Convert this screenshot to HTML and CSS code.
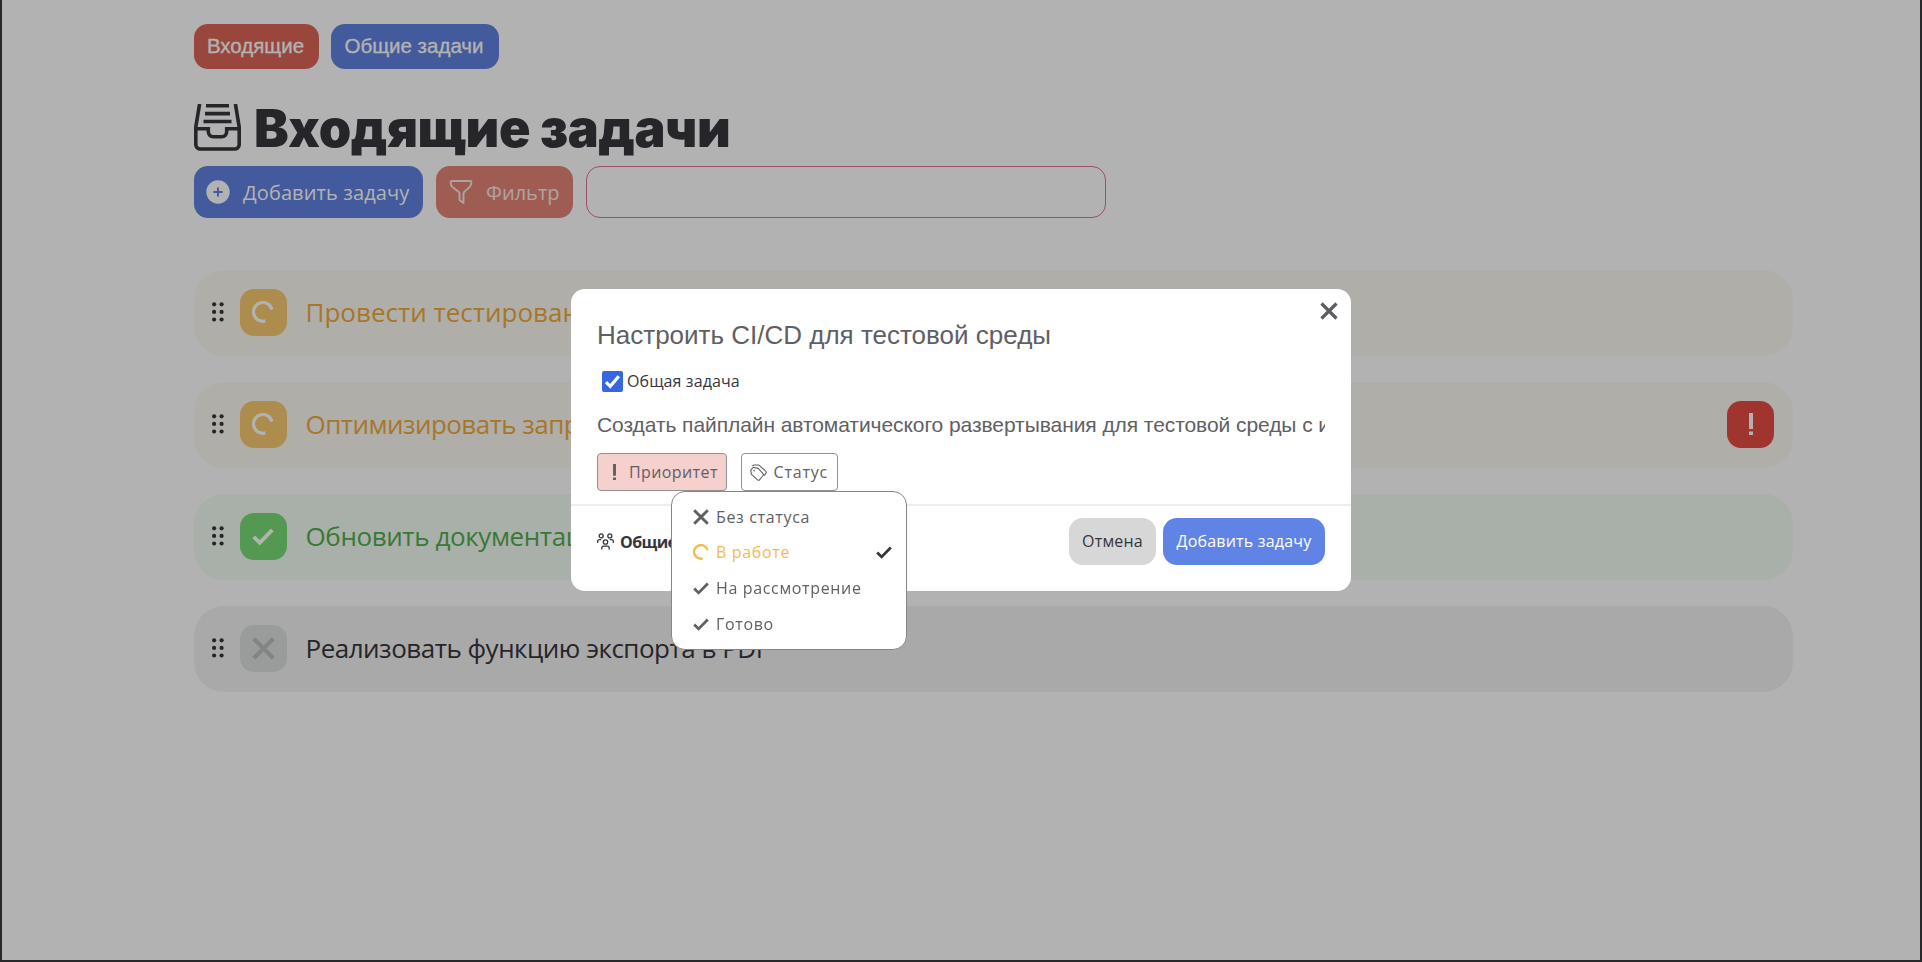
FILE: index.html
```html
<!DOCTYPE html>
<html lang="ru">
<head>
<meta charset="utf-8">
<title>Входящие задачи</title>
<link rel="stylesheet" href="styles.css">
</head>
<body>
<svg width="0" height="0" class="defs" aria-hidden="true">
  <symbol id="dots" viewBox="0 0 12 20"><g fill="currentColor"><circle cx="2.1" cy="2.3" r="2.1"/><circle cx="9.6" cy="2.3" r="2.1"/><circle cx="2.1" cy="9.9" r="2.1"/><circle cx="9.6" cy="9.9" r="2.1"/><circle cx="2.1" cy="17.5" r="2.1"/><circle cx="9.6" cy="17.5" r="2.1"/></g></symbol>
  <symbol id="ring" viewBox="0 0 22 22"><path d="M13.4 19.9A9.4 9.4 0 1 1 20 8.6" fill="none" stroke="currentColor" stroke-width="3.2"/></symbol>
  <symbol id="check" viewBox="0 0 16 16"><path d="M1.2 8.6 5.6 12.9 14.8 3.6" fill="none" stroke="currentColor" stroke-width="2.8"/></symbol>
  <symbol id="cross" viewBox="0 0 16 16"><path d="M1.2 1.2 14.8 14.8M14.8 1.2 1.2 14.8" fill="none" stroke="currentColor" stroke-width="2.9"/></symbol>
  <symbol id="bang" viewBox="0 0 4 22"><path d="M0 0h4v16H0zM0 18.6h4V22H0z" fill="currentColor"/></symbol>
</svg>

<div class="page">
  <nav class="nav">
    <a class="pill pill-red">Входящие</a>
    <a class="pill pill-blue">Общие задачи</a>
  </nav>
  <h1 class="title">
    <svg class="title-icon" viewBox="0 0 47 47" fill="none" stroke="currentColor"><path d="M5.6 0 1.8 23v17.5a4.5 4.5 0 0 0 4.5 4.5h34.4a4.5 4.5 0 0 0 4.5-4.5V23L41.4 0" stroke-width="3.6"/><path d="M2 24.8h12.3v2.7c0 3 2 5.2 5 5.2h8.4c3 0 5-2.2 5-5.2v-2.7H45" stroke-width="3.6"/><path d="M12 1.6h23M11 9.6h25M9.500 17.5h28" stroke-width="3.6"/></svg>
    <span>Входящие задачи</span>
  </h1>
  <div class="tools">
    <button class="tool tool-add"><svg width="24" height="24" viewBox="0 0 24 24"><circle cx="12" cy="12" r="11.7" fill="#fff"/><path d="M12 7.4v9.2M7.4 12h9.2" stroke="#6081e0" stroke-width="2"/></svg>Добавить задачу</button>
    <button class="tool tool-filter"><svg width="24" height="24" viewBox="0 0 24 24" fill="none" stroke="currentColor" stroke-width="1.9" stroke-linejoin="round"><path d="M2.800 1h18.400c.8 0 1.200.6 1.200 1.400 0 2-.8 3.500-2 4.700l-5.200 4.800c-.5.500-.7 1-.7 1.700v9.400l-4-3.100v-6.300c0-.7-.2-1.200-.7-1.700L4 7.600C2.500 6.300 1.600 4.500 1.600 2.400 1.600 1.600 2 1 2.800 1z"/></svg>Фильтр</button>
    <input class="search" type="text">
  </div>
  <main class="list">
    <div class="row row-work"><svg class="drag"><use href="#dots"/></svg><span class="badge"><svg width="22" height="22"><use href="#ring"/></svg></span><span class="name">Провести тестирование</span></div>
    <div class="row row-work"><svg class="drag"><use href="#dots"/></svg><span class="badge"><svg width="22" height="22"><use href="#ring"/></svg></span><span class="name name-tight">Оптимизировать запросы</span><span class="badge urgent"><svg width="4" height="22"><use href="#bang"/></svg></span></div>
    <div class="row row-done"><svg class="drag"><use href="#dots"/></svg><span class="badge"><svg width="22" height="22"><use href="#check"/></svg></span><span class="name">Обновить документацию</span></div>
    <div class="row row-none"><svg class="drag"><use href="#dots"/></svg><span class="badge"><svg width="23" height="23"><use href="#cross"/></svg></span><span class="name">Реализовать функцию экспорта в PDF</span></div>
  </main>
</div>

<div class="overlay">
  <section class="modal">
    <svg class="close" viewBox="0 0 18 18"><path d="M1.500 1.500 16.500 16.500M16.500 1.500 1.500 16.500" stroke="currentColor" stroke-width="3.2"/></svg>
    <div class="body">
      <h2 class="task-title">Настроить CI/CD для тестовой среды</h2>
      <label class="shared"><span class="box"><svg width="17" height="17" viewBox="0 0 17 17"><path d="M2 9.2 6.2 13.3 14.8 3.3" fill="none" stroke="#fff" stroke-width="3.2"/></svg></span>Общая задача</label>
      <p class="desc">Создать пайплайн автоматического развертывания для тестовой среды с использованием</p>
      <div class="chips">
        <button class="chip chip-priority"><svg width="3" height="16"><use href="#bang"/></svg>Приоритет</button>
        <div class="status">
          <button class="chip chip-status"><svg width="17" height="17" viewBox="0 0 17 17" fill="none" stroke="currentColor" stroke-width="1.1" stroke-linejoin="round"><path d="M.8 6.200 2.600 4c.4-.4.8-.6 1.400-.5l3.300.6c.5.1.8.3 1.100.6l4.700 4.900c.5.600.5 1.300 0 1.900l-3.600 4.300c-.5.600-1.300.6-1.900 0L1.800 10.700c-.3-.3-.5-.6-.5-1z"/><path d="M2.200 2.100 4 1h4.200c.6 0 1 .2 1.400.6l6.200 5.700c.6.600.6 1.300.1 2l-1.800 2.400"/><circle cx="4.200" cy="6.600" r=".3"/></svg>Статус</button>
          <ul class="menu">
            <li><svg class="mi"><use href="#cross"/></svg>Без статуса</li>
            <li class="current"><svg class="mi"><use href="#ring"/></svg>В работе<svg class="mi mark"><use href="#check"/></svg></li>
            <li><svg class="mi"><use href="#check"/></svg>На рассмотрение</li>
            <li><svg class="mi"><use href="#check"/></svg>Готово</li>
          </ul>
        </div>
      </div>
    </div>
    <footer class="foot">
      <div class="group"><svg width="17" height="17" viewBox="0 0 17 17" fill="none" stroke="currentColor" stroke-width="1.3"><circle cx="4.200" cy="2.900" r="2"/><circle cx="12.800" cy="2.900" r="2"/><circle cx="8.500" cy="9" r="2.200"/><path d="M.7 10V8.500c0-1.200.8-1.900 2-1.900h1.500M16.300 10V8.500c0-1.200-.8-1.900-2-1.900h-1.500M4.800 16.500v-1.400c0-1.200.8-1.900 2-1.900h3.400c1.200 0 2 .7 2 1.900v1.400"/></svg>Общие задачи</div>
      <button class="btn btn-cancel">Отмена</button>
      <button class="btn btn-submit">Добавить задачу</button>
    </footer>
  </section>
</div>
<div class="frame"></div>
</body>
</html>
```
FILE: styles.css
```css
* { box-sizing: border-box; }
body { margin: 0; height: 962px; overflow: hidden; background: #fff; color: #35363d; font: 16px "Open Sans", sans-serif; }
h1, h2, p, ul { margin: 0; padding: 0; }
button { border: 0; margin: 0; font: inherit; color: inherit; white-space: nowrap; }
svg { display: block; flex: none; }
.defs { position: absolute; }

.page { width: 1599px; margin-left: 194px; padding-top: 24px; }
.nav { display: flex; gap: 12px; }
.pill { display: flex; align-items: center; justify-content: center; height: 45px; padding: 0 2px 2px 0; border-radius: 14px; color: #fff; font: 20.5px "Liberation Sans", Arial, sans-serif; -webkit-text-stroke: .3px #fff; }
.pill-red { width: 125px; background: #dc6657; }
.pill-blue { width: 168px; background: #6081e0; }

.title { display: flex; align-items: flex-start; gap: 13px; height: 62px; margin-top: 35px; font: 900 52px/49px Inter, sans-serif; letter-spacing: -.4px; white-space: nowrap; }
.title-icon { width: 47px; height: 47px; }

.tools { display: flex; gap: 13px; }
.tool { display: flex; align-items: center; gap: 13px; height: 52px; padding: 0 13px; border-radius: 14px; color: #fff; font-size: 20px; }
.tool-add { width: 229px; padding-left: 12px; background: #6081e0; letter-spacing: .1px; }
.tool-filter { width: 137px; background: #e48577; color: #f8e9e6; }
.search { width: 520px; height: 52px; border: 1.5px solid #e0709c; border-radius: 14px; background: #fff; outline: 0; }

.list { display: flex; flex-direction: column; gap: 26px; margin-top: 51.5px; }
.row { display: flex; align-items: center; height: 86px; padding: 0 19px 1px 17.5px; border-radius: 30px; }
.drag { width: 12px; height: 20px; margin-right: 16px; }
.badge { display: flex; align-items: center; justify-content: center; width: 47px; height: 47px; border-radius: 14px; color: #fff; }
.name { margin-left: 19px; font-size: 26px; white-space: nowrap; }
.row-work { background: #fcfaf3; }
.row-work .badge { background: #f8cb70; }
.row-work .name { color: #f0aa3c; }
.row-work .name-tight { letter-spacing: -.55px; }
.row-work .urgent { margin-left: auto; background: #e54c45; }
.row-done { background: #f3fcf3; }
.row-done .badge { background: #79db74; }
.row-done .name { color: #53ae4d; letter-spacing: -.4px; }
.row-none { background: #f3f3f3; }
.row-none .badge { background: #dce0df; color: #babfbd; }
.row-none .name { letter-spacing: -.5px; }

.overlay { position: fixed; inset: 0; display: flex; align-items: flex-start; padding: 289px 0 0 571px; background: rgba(0, 0, 0, .3); }
.modal { position: relative; width: 780px; height: 302px; border-radius: 14px; background: #fff; }
.close { position: absolute; right: 13px; top: 13px; width: 18px; height: 18px; color: #5c5d61; }
.body { height: 217px; padding: 28px 26px 0; border-bottom: 2px solid #eee; }
.task-title { height: 36px; color: #5f6064; font: 26px/37px "Liberation Sans", Arial, sans-serif; white-space: nowrap; }
.shared { display: flex; align-items: center; gap: 4px; height: 22px; margin: 17px 0 0 5px; letter-spacing: .1px; }
.box { display: flex; align-items: center; justify-content: center; width: 21px; height: 21px; border-radius: 2px; background: #3666e0; }
.desc { height: 30px; margin-top: 17px; overflow: hidden; color: #5f6064; font: 21px/32px "Liberation Sans", Arial, sans-serif; letter-spacing: -.07px; white-space: nowrap; }
.chips { display: flex; gap: 13.5px; margin-top: 14px; }
.chip { display: flex; align-items: center; height: 38px; border: 1px solid #929296; border-radius: 4px; background: #fff; color: #5f6064; letter-spacing: .4px; }
.chip-priority { width: 130px; padding: 0 0 0 15px; gap: 13px; background: #f5d0cd; }
.chip-status { width: 97px; padding: 0 0 0 8px; gap: 7px; letter-spacing: .8px; }
.status { position: relative; }
.menu { position: absolute; left: -69.5px; top: 38px; width: 236px; height: 158.5px; padding: 7px 14px 0 21px; border: 1px solid #86868a; border-radius: 14px; background: #fff; color: #5f6064; list-style: none; letter-spacing: .65px; }
.menu li { display: flex; align-items: center; gap: 7px; height: 35.6px; white-space: nowrap; }
.mi { width: 16px; height: 16px; }
.menu .current { color: #f4ba4e; }
.mark { margin-left: auto; color: #35363d; }

.foot { display: flex; align-items: center; gap: 7px; padding: 12px 26px 0; }
.group { display: flex; align-items: center; gap: 6px; margin-right: auto; font-weight: 700; letter-spacing: -.6px; white-space: nowrap; }
.btn { height: 47px; padding: 0 0 1px; border-radius: 14px; }
.btn-cancel { width: 87px; background: #d7d7d7; letter-spacing: .2px; }
.btn-submit { width: 162px; background: #5f84e6; color: #fff; letter-spacing: .2px; }

.frame { position: fixed; inset: 0; border: solid #29292b; border-width: 0 2px 2px; pointer-events: none; }
```
